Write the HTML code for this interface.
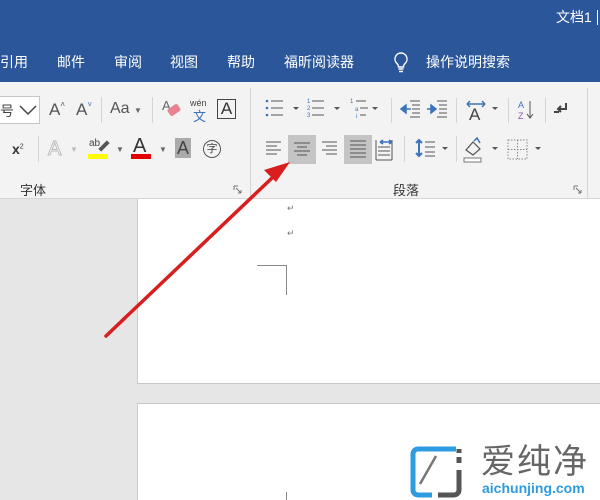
<!DOCTYPE html>
<html><head><meta charset="utf-8"><style>
*{margin:0;padding:0;box-sizing:border-box}
body{width:600px;height:500px;overflow:hidden;position:relative;background:#e6e6e6;font-family:"Liberation Sans","Noto Sans CJK SC",sans-serif}
.a{position:absolute}
.t{color:#fff;font-size:14px;line-height:16px;top:54px;white-space:nowrap}
.lb{font-size:13px;color:#333;top:180px}
.dd{font-size:8px;color:#666}
.sep{width:1px;background:#d4d4d4}
</style></head><body>
<div class="a" style="left:0;top:0;width:600px;height:82px;background:#2b579a"></div>
<div class="a t" style="left:556px;top:9px">文档1</div>
<div class="a" style="left:597px;top:10px;width:1px;height:15px;background:#fff"></div>
<div class="a t" style="left:0">引用</div>
<div class="a t" style="left:57px">邮件</div>
<div class="a t" style="left:114px">审阅</div>
<div class="a t" style="left:170px">视图</div>
<div class="a t" style="left:227px">帮助</div>
<div class="a t" style="left:284px">福昕阅读器</div>
<svg class="a" style="left:393px;top:51px" width="16" height="24" viewBox="0 0 16 24"><path d="M8 2a6 6 0 0 0-4 10.5c1 1 1.5 2 1.5 3.5h5c0-1.5.5-2.5 1.5-3.5A6 6 0 0 0 8 2z" fill="none" stroke="#fff" stroke-width="1.4"/><path d="M5.5 18h5M6 20.5h4" stroke="#fff" stroke-width="1.4"/></svg>
<div class="a t" style="left:426px">操作说明搜索</div>

<div class="a" style="left:0;top:82px;width:600px;height:117px;background:#f3f3f3;border-bottom:1px solid #d6d6d6"></div>
<div class="a" style="left:0;top:96px;width:40px;height:28px;background:#fff;border:1px solid #c6c6c6;border-left:none"></div>
<div class="a" style="left:0;top:101px;font-size:14px;color:#444">号</div>
<svg class="a" style="left:18px;top:103px" width="20" height="14"><path d="M2 3l8 8 8-8" fill="none" stroke="#444" stroke-width="1.5"/></svg>
<div class="a" style="left:49px;top:100px;font-size:17px;color:#555">A<span style="font-size:8px;vertical-align:top">˄</span></div>
<div class="a" style="left:76px;top:100px;font-size:17px;color:#555">A<span style="font-size:8px;vertical-align:top;color:#3b73b9">˅</span></div>
<div class="a sep" style="left:101px;top:97px;height:26px"></div>
<div class="a" style="left:110px;top:100px;font-size:16px;color:#555">Aa</div><div class="a dd" style="left:134px;top:106px">▼</div>
<div class="a sep" style="left:152px;top:97px;height:26px"></div>
<div class="a" style="left:162px;top:98px;font-size:13px;color:#666">A</div>
<div class="a" style="left:168px;top:106px;width:12px;height:8px;background:#e8838f;transform:rotate(-35deg);border-radius:2px"></div>
<div class="a" style="left:190px;top:98px;font-size:9px;color:#444">wén</div>
<div class="a" style="left:193px;top:106px;font-size:13px;color:#3b73b9">文</div>
<div class="a" style="left:217px;top:99px;width:19px;height:20px;border:1.5px solid #444;font-size:17px;line-height:17px;text-align:center;color:#333">A</div>
<div class="a" style="left:12px;top:141px;font-size:14px;font-weight:bold;color:#333">x<sup style="font-size:7px;font-weight:normal">2</sup></div>
<div class="a sep" style="left:38px;top:136px;height:26px"></div>
<div class="a" style="left:48px;top:138px;font-size:20px;color:#fff;-webkit-text-stroke:1px #bbb">A</div><div class="a dd" style="left:70px;top:145px;color:#bbb">▼</div>
<div class="a" style="left:89px;top:138px;font-size:10px;color:#444">ab</div>
<div class="a" style="left:98px;top:144px;width:12px;height:4px;background:#555;transform:rotate(-45deg)"></div>
<div class="a" style="left:88px;top:154px;width:20px;height:5px;background:#ffff00"></div>
<div class="a dd" style="left:116px;top:145px">▼</div>
<div class="a" style="left:133px;top:135px;font-size:20px;color:#333">A</div>
<div class="a" style="left:131px;top:154px;width:20px;height:5px;background:#e00000"></div>
<div class="a dd" style="left:159px;top:145px">▼</div>
<div class="a" style="left:175px;top:138px;width:16px;height:20px;background:#aaa;font-size:18px;line-height:20px;text-align:center;color:#444">A</div>
<div class="a" style="left:203px;top:140px;width:18px;height:18px;border:1px solid #555;border-radius:50%;font-size:11px;line-height:16px;text-align:center;color:#444">字</div>
<div class="a lb" style="left:20px">字体</div>
<svg class="a" style="left:233px;top:185px" width="9" height="9"><path d="M1 1h4M1 1v4M8 8L3 3M8 8h-3M8 8v-3" stroke="#777" fill="none"/></svg>
<div class="a sep" style="left:250px;top:88px;height:110px"></div>

<svg class="a" style="left:262px;top:98px" width="320" height="70">
<g fill="#3b73b9"><circle cx="5" cy="3" r="1.3"/><circle cx="5" cy="10" r="1.3"/><circle cx="5" cy="17" r="1.3"/></g>
<g stroke="#555"><path d="M9 3h12M9 10h12M9 17h12"/><path d="M50 3h12M50 10h12M50 17h12"/><path d="M94 3h10M98 10h8M98 17h6"/></g>
<g font-size="6" fill="#3b73b9" font-family="Liberation Sans"><text x="45" y="5">1</text><text x="45" y="12">2</text><text x="45" y="19">3</text><text x="88" y="5">1</text><text x="93" y="13">a</text><text x="94" y="20">i</text></g>
<g fill="#555"><path d="M31 9l3 3 3-3z"/><path d="M72 9l3 3 3-3z"/><path d="M110 9l3 3 3-3z"/><path d="M230 9l3 3 3-3z"/></g>
<rect x="129" y="-1" width="1" height="26" fill="#d4d4d4"/>
<g stroke="#555"><path d="M148 3h10M150 7h8M150 11h8M150 15h8M148 19h10"/><path d="M175 3h10M177 7h8M177 11h8M177 15h8M175 19h10"/></g>
<path d="M139 11l5-4v8z M143 11h6" fill="#3b73b9" stroke="#3b73b9" stroke-width="1.5"/>
<path d="M174 11l-5-4v8z M165 11h6" fill="#3b73b9" stroke="#3b73b9" stroke-width="1.5"/>
<rect x="194" y="-1" width="1" height="26" fill="#d4d4d4"/>
<text x="207" y="22" font-size="17" fill="#444" font-family="Liberation Sans">A</text>
<path d="M205 6h18M205 6l3-3M205 6l3 3M223 6l-3-3M223 6l-3 3" stroke="#3b73b9" fill="none" stroke-width="1.5"/>
<rect x="246" y="-1" width="1" height="26" fill="#d4d4d4"/>
<text x="256" y="10" font-size="9" fill="#3b73b9" font-family="Liberation Sans">A</text><text x="256" y="21" font-size="9" fill="#8a5aa6" font-family="Liberation Sans">Z</text>
<path d="M268 3v16M265 16l3 4 3-4" stroke="#555" fill="none"/>
<rect x="283" y="-1" width="1" height="26" fill="#d4d4d4"/>
<path d="M304 5v6h-8M299 8l-3 3 3 3M292 14h5" stroke="#444" fill="none" stroke-width="2"/>
<g stroke="#555" fill="none" transform="translate(0,40)"><path d="M4 4h15M4 8h11M4 12h15M4 16h11"/></g>
<rect x="26" y="37" width="28" height="29" fill="#c4c4c4"/>
<g stroke="#555" fill="none" transform="translate(0,40)"><path d="M32 5h16M35 9h10M32 13h16M35 17h10"/><path d="M60 4h15M64 8h11M60 12h15M64 16h11"/></g>
<rect x="82" y="37" width="28" height="29" fill="#c4c4c4"/>
<g stroke="#555" fill="none" transform="translate(0,40)"><path d="M88 3h16M88 7h16M88 11h16M88 15h16M88 19h16"/><path d="M116 9h12M116 13h12M116 17h12"/><path d="M114 2v20M130 2v20M114 22h16"/></g>
<path d="M118 44h12M118 44l3-2M118 44l3 2M130 44l-3-2M130 44l-3 2" stroke="#3b73b9" fill="none" stroke-width="1.5"/>
<rect x="142" y="38" width="1" height="26" fill="#d4d4d4"/>
<path d="M157 42v16M154 45l3-3 3 3M154 55l3 3 3-3" stroke="#3b73b9" fill="none" stroke-width="2"/>
<path d="M163 44h10M163 49h10M163 54h10M163 58h10" stroke="#555"/>
<path d="M180 49l3 3 3-3z" fill="#555"/>
<rect x="194" y="38" width="1" height="26" fill="#d4d4d4"/>
<path d="M204 52l7-8 7 7-7 6z" fill="none" stroke="#555" stroke-width="1.2"/><path d="M212 43l3-3 3 5" stroke="#3b73b9" fill="none" stroke-width="1.5"/>
<rect x="202" y="60" width="17" height="4" fill="#fff" stroke="#777"/>
<path d="M230 49l3 3 3-3z" fill="#555"/>
<rect x="246" y="42" width="19" height="19" fill="none" stroke="#888" stroke-dasharray="1.5 1.5"/><path d="M255.5 42v19M246 51.5h19" stroke="#888" stroke-dasharray="1.5 1.5"/>
<path d="M273 49l3 3 3-3z" fill="#555"/>
</svg>
<div class="a lb" style="left:393px">段落</div>
<svg class="a" style="left:573px;top:185px" width="9" height="9"><path d="M1 1h4M1 1v4M8 8L3 3M8 8h-3M8 8v-3" stroke="#777" fill="none"/></svg>
<div class="a sep" style="left:587px;top:88px;height:110px"></div>

<div class="a" style="left:137px;top:199px;width:463px;height:185px;background:#fff;border-left:1px solid #ccc;border-bottom:1px solid #c8c8c8"></div>
<div class="a" style="left:137px;top:403px;width:463px;height:97px;background:#fff;border-left:1px solid #ccc;border-top:1px solid #c8c8c8"></div>
<div class="a" style="left:287px;top:203px;font-size:9px;color:#777">↵</div>
<div class="a" style="left:287px;top:228px;font-size:9px;color:#777">↵</div>
<div class="a" style="left:257px;top:265px;width:30px;height:30px;border-top:1px solid #888;border-right:1px solid #888"></div>
<div class="a" style="left:286px;top:492px;width:1px;height:8px;background:#888"></div>

<svg class="a" style="left:410px;top:446px" width="60" height="52"><path d="M46 3H8a5 5 0 0 0-5 5v36a5 5 0 0 0 5 5h14" fill="none" stroke="#2f9be0" stroke-width="5"/><path d="M28 49h16a5 5 0 0 0 5-5V24M49 11v6M49 3v4" fill="none" stroke="#555" stroke-width="5"/><path d="M10 38L26 10" stroke="#777" stroke-width="2.5"/></svg>
<div class="a" style="left:481px;top:444px;font-size:34px;line-height:36px;color:#666;letter-spacing:2px">爱纯净</div>
<div class="a" style="left:482px;top:481px;font-size:14px;line-height:14px;color:#2f9be0;font-weight:bold">aichunjing.com</div>

<svg class="a" style="left:0;top:0" width="600" height="500"><line x1="106" y1="336" x2="272" y2="178" stroke="#d81e1e" stroke-width="3.5" stroke-linecap="round"/><path d="M290 162l-26 8 12 12z" fill="#d81e1e"/></svg>
</body></html>
